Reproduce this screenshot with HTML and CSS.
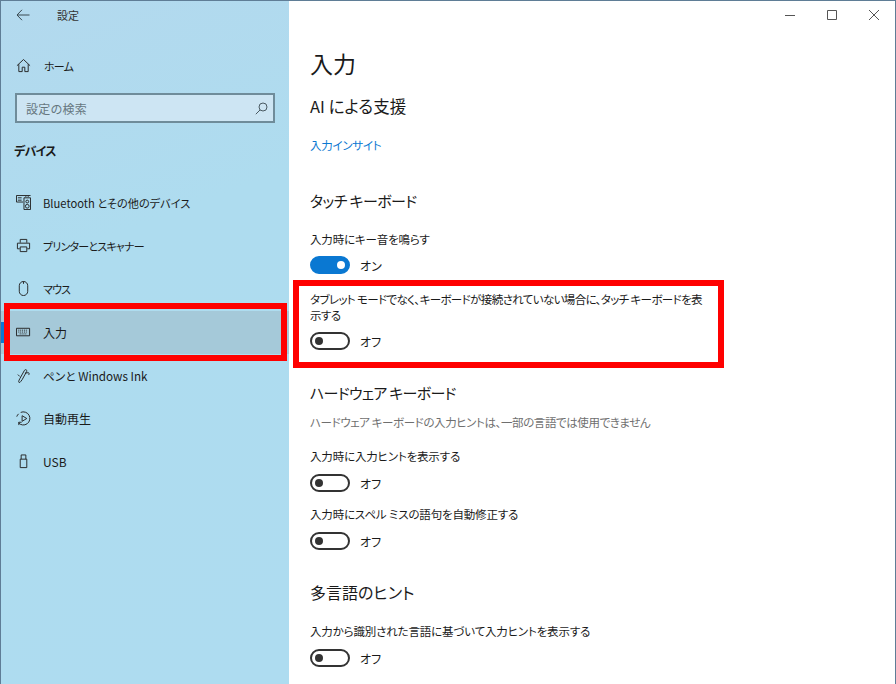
FILE: index.html
```html
<!DOCTYPE html>
<html lang="ja">
<head>
<meta charset="utf-8">
<title>設定</title>
<link rel="stylesheet" href="styles.css">
</head>
<body>
<div class="window">
  <aside class="sidebar">
    <div class="titlebar">
      <svg class="back" width="14" height="12" viewBox="0 0 14 12"><path d="M6 .8 1 6l5 5.2M1 6h12.500" fill="none" stroke="#3a4a52" stroke-width="1"/></svg>
      <span class="apptitle">設定</span>
    </div>
    <a class="nav home">
      <svg class="ic" width="16" height="16" viewBox="0 0 16 16"><path d="M1 8.200 8 1.600l7 6.600M3 6.600V14.500h3.600V9.800h2.800v4.700H13V6.600" fill="none" stroke="#222" stroke-width="1"/></svg>
      <span class="tight">ホーム</span>
    </a>
    <div class="search">
      <span>設定の検索</span>
      <svg width="13" height="13" viewBox="0 0 13 13"><circle cx="8" cy="5" r="4" fill="none" stroke="#4a5a62"/><path d="M5 8 .8 12.200" stroke="#4a5a62" fill="none"/></svg>
    </div>
    <h2 class="group">デバイス</h2>
    <nav class="navlist">
      <a class="nav">
        <svg class="ic" width="16" height="16" viewBox="0 0 16 16"><path d="M.5.500h15M.5.500v7h7M2 3h4M2 5.500h4M8.500 3h7v12.500h-7zM10.500 1v1M13 1v1" fill="none" stroke="#222"/><circle cx="12" cy="7" r="1.500" fill="none" stroke="#222"/><circle cx="12" cy="12" r="2" fill="none" stroke="#222"/></svg>
        <span class="mid">Bluetooth とその他のデバイス</span>
      </a>
      <a class="nav">
        <svg class="ic" width="16" height="16" viewBox="0 0 16 16"><path d="M4.500 5V1.500h7V5M4 11.500H1.500V5.500h13v6H12M4.500 9.500h7v5h-7z" fill="none" stroke="#222"/></svg>
        <span class="tight">プリンターとスキャナー</span>
      </a>
      <a class="nav">
        <svg class="ic" width="16" height="16" viewBox="0 0 16 16"><path d="M3.500 5a4.500 4.500 0 0 1 9 0v6a4.500 4.500 0 0 1-9 0zM8 .5v2.500" fill="none" stroke="#222"/></svg>
        <span class="tight">マウス</span>
      </a>
      <a class="nav selected">
        <svg class="ic" width="16" height="16" viewBox="0 0 16 16"><path d="M.5 3.500h14v8H.5z" fill="none" stroke="#222"/><path d="M2.500 5.500h10M2.500 7.500h10M4 9.500h7" stroke="#222" stroke-dasharray="1 1" fill="none"/></svg>
        <span>入力</span>
      </a>
      <a class="nav">
        <svg class="ic" width="16" height="16" viewBox="0 0 16 16"><path d="M4 15.500c-2 0-1-2 0-4l5-9c1-1.500 3-.5 2.500 1l-5 9c-1 1.500-2 2.500-2.500 3zM9.500 5.500l3.500-.5c1.500 0 1 1.500.5 2.500M4 9 2 7" fill="none" stroke="#222"/></svg>
        <span class="pen">ペンと Windows Ink</span>
      </a>
      <a class="nav">
        <svg class="ic" width="16" height="16" viewBox="0 0 16 16"><path d="M5 1.500a7 7 0 1 1-2.500 11M3 15V12h3" fill="none" stroke="#222"/><path d="M.8 6a7 7 0 0 1 2-3" fill="none" stroke="#222"/><path d="M6.500 5v6L11.500 8z" fill="none" stroke="#222"/></svg>
        <span>自動再生</span>
      </a>
      <a class="nav">
        <svg class="ic" width="16" height="16" viewBox="0 0 16 16"><path d="M4.500 5.500h7v9h-7zM5.500 5.500V1h5v4.500" fill="none" stroke="#222"/></svg>
        <span>USB</span>
      </a>
    </nav>
  </aside>
  <main class="content">
    <div class="caption">
      <svg width="10" height="1" viewBox="0 0 10 1"><path d="M0 .5h10" stroke="#555"/></svg>
      <svg width="10" height="10" viewBox="0 0 10 10"><path d="M.5.500h9v9h-9z" fill="none" stroke="#555"/></svg>
      <svg width="10" height="10" viewBox="0 0 10 10"><path d="M0 0l10 10M10 0 0 10" stroke="#555" fill="none"/></svg>
    </div>
    <h1>入力</h1>
    <h3 class="first">AI による支援</h3>
    <a class="link">入力インサイト</a>
    <h3 class="touch">タッチ キーボード</h3>
    <div class="setting s1">
      <p>入力時にキー音を鳴らす</p>
      <div class="toggle-row"><span class="toggle on"></span><span>オン</span></div>
    </div>
    <div class="setting s2">
      <p>タブレット モードでなく、キーボードが接続されていない場合に、タッチ キーボードを表示する</p>
      <div class="toggle-row"><span class="toggle"></span><span>オフ</span></div>
    </div>
    <h3 class="hard">ハードウェア キーボード</h3>
    <p class="note">ハードウェア キーボードの入力ヒントは、一部の言語では使用できません</p>
    <div class="setting s3">
      <p>入力時に入力ヒントを表示する</p>
      <div class="toggle-row"><span class="toggle"></span><span>オフ</span></div>
    </div>
    <div class="setting s4">
      <p>入力時にスペル ミスの語句を自動修正する</p>
      <div class="toggle-row"><span class="toggle"></span><span>オフ</span></div>
    </div>
    <h3 class="multi">多言語のヒント</h3>
    <div class="setting s5">
      <p>入力から識別された言語に基づいて入力ヒントを表示する</p>
      <div class="toggle-row"><span class="toggle"></span><span>オフ</span></div>
    </div>
  </main>
  <div class="mark mark-nav"></div>
  <div class="mark mark-setting"></div>
</div>
</body>
</html>
```
FILE: styles.css
```css
* { box-sizing: border-box; }
html, body { margin: 0; height: 100%; overflow: hidden; }
body { font-family: "Noto Sans CJK JP", "Noto Sans", sans-serif; font-feature-settings: "palt"; color: #1a1a1a; font-size: 12px; background: #fff; }
.window { position: relative; width: 896px; height: 684px; display: flex; border: 1px solid #5f7d96; border-bottom: 0; }
.sidebar { width: 288px; flex: none; background: linear-gradient(160deg, #b3d9ee 0%, #aedcef 35%, #aedcf0 100%); }
.titlebar { height: 28px; display: flex; align-items: center; padding-left: 15px; }
.back { flex: none; }
.apptitle { margin-left: 27px; font-size: 11px; color: #333; }
.nav { position: relative; display: flex; align-items: center; height: 43.200px; padding-left: 15px; color: #1a1a1a; }
.nav .ic { flex: none; width: 15px; height: 15px; }
.nav span { margin-left: 12px; }
.nav .tight { font-size: 11px; letter-spacing: -.8px; }
.nav .mid { font-size: 11.200px; }
.nav .pen { font-size: 11.700px; }
.home { margin-top: 15px; height: 43px; }
.home span { margin-left: 13px; }
.search { margin: 6px 14px 0 14px; height: 30px; border: 2px solid #6f8c9a; background: #cde5f3; display: flex; align-items: center; justify-content: space-between; padding: 0 5px 0 9px; color: #66777f; }
.search span { letter-spacing: .3px; }
.group { margin: 19px 0 0 13px; font-size: 12px; font-weight: 700; line-height: 18px; letter-spacing: -.8px; }
.navlist { margin-top: 21px; }
.selected { background: #a5c9d9; }
.selected::before { content: ""; position: absolute; left: 0; top: 11px; width: 3px; height: 21px; background: #0a78d2; }
.content { flex: 1; position: relative; padding: 0 0 0 21px; }
.caption { position: absolute; right: 0; top: 0; width: 126px; height: 28px; display: flex; align-items: center; justify-content: space-between; padding: 0 16px 0 16px; }
h1 { margin: 0; padding-top: 45px; font-size: 23px; font-weight: 400; line-height: 34px; }
h3 { margin: 0; font-size: 16px; font-weight: 400; line-height: 24px; }
.first { margin-top: 14px; font-size: 16.500px; }
.link { display: block; margin-top: 18px; color: #0a78d2; line-height: 18px; font-size: 11.500px; letter-spacing: -.27px; }
.touch { margin-top: 36px; font-size: 15px; line-height: 22px; letter-spacing: -.6px; }
.setting p { margin: 0; line-height: 16px; width: 400px; font-size: 11.500px; letter-spacing: -.16px; }
.toggle-row { display: flex; align-items: center; gap: 10px; height: 20px; margin-top: 8px; }
.toggle { width: 40px; height: 18px; border: 2px solid #333; border-radius: 9px; position: relative; flex: none; }
.toggle::after { content: ""; position: absolute; left: 3px; top: 3px; width: 8px; height: 8px; border-radius: 50%; background: #333; }
.toggle.on { background: #0a78d2; border-color: #0a78d2; }
.toggle.on::after { left: auto; right: 3px; background: #fff; }
.s1 { margin-top: 19px; }
.s2 { margin-top: 16px; }
.s2 p { letter-spacing: -.62px; }
.hard { margin-top: 31px; font-size: 15px; line-height: 22px; letter-spacing: -.7px; }
.note { margin: 9px 0 0; color: #6f6f6f; line-height: 18px; font-size: 11.500px; letter-spacing: -.4px; }
.s3 { margin-top: 17px; }
.s3 .toggle-row { margin-top: 9px; }
.s4 { margin-top: 13px; }
.s4 .toggle-row { margin-top: 9px; }
.multi { margin-top: 30px; line-height: 22px; }
.s5 { margin-top: 20px; }
.s5 .toggle-row { margin-top: 9px; }
.mark { position: absolute; border: 6px solid #f00; pointer-events: none; }
.mark-nav { left: 3px; top: 302px; width: 283px; height: 58px; }
.mark-setting { left: 292px; top: 279px; width: 431px; height: 88px; }
```
